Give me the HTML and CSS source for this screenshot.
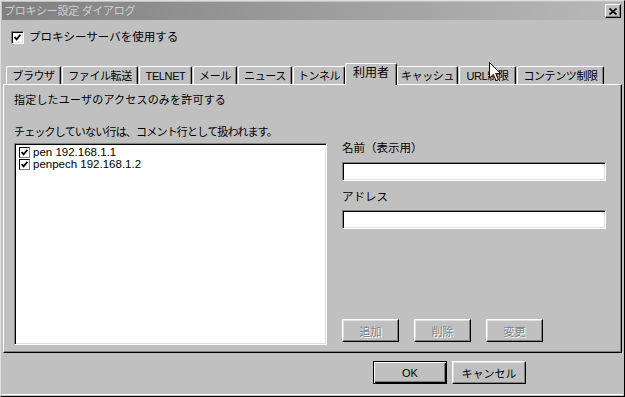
FILE: index.html
```html
<!DOCTYPE html>
<html>

<head>
  <meta charset="UTF-8">
  <title>プロキシー設定 ダイアログ</title>
  <link rel="stylesheet" href="styles.css">
</head>

<body>

  <div id="dialog">

    <div id="title-bar">
      <span id="title-text">プロキシー設定 ダイアログ</span>
      <button id="close-button">
        <svg width="8" height="7" viewBox="0 0 8 7"><path d="M0.5 0.5 L7.5 6.5 M7.5 0.5 L0.5 6.5" stroke="#000" stroke-width="1.6" fill="none"/></svg>
      </button>
    </div>

    <div id="use-proxy">
      <span class="check-box">
        <svg class="tick" width="7" height="7" viewBox="0 0 7 7"><path d="M0.6 3 L2.6 5.3 L6.4 0.8" stroke="#000" stroke-width="1.8" fill="none"/></svg>
      </span>
      <label>プロキシーサーバを使用する</label>
    </div>

    <div id="tab-row">
      <div class="tab">ブラウザ</div>
      <div class="tab">ファイル転送</div>
      <div class="tab">TELNET</div>
      <div class="tab">メール</div>
      <div class="tab">ニュース</div>
      <div class="tab">トンネル</div>
      <div class="tab active">利用者</div>
      <div class="tab">キャッシュ</div>
      <div class="tab">URL制限</div>
      <div class="tab">コンテンツ制限</div>
    </div>

    <div id="tab-panel">
      <div class="panel-line">指定したユーザのアクセスのみを許可する</div>

      <div class="panel-columns">
        <div class="user-column">
          <div class="field-label note">チェックしていない行は、コメント行として扱われます。</div>
          <div id="user-list">
            <div class="list-row">
              <span class="check-box small">
                <svg class="tick" width="7" height="7" viewBox="0 0 7 7"><path d="M0.6 3 L2.6 5.3 L6.4 0.8" stroke="#000" stroke-width="1.8" fill="none"/></svg>
              </span>
              <span>pen 192.168.1.1</span>
            </div>
            <div class="list-row">
              <span class="check-box small">
                <svg class="tick" width="7" height="7" viewBox="0 0 7 7"><path d="M0.6 3 L2.6 5.3 L6.4 0.8" stroke="#000" stroke-width="1.8" fill="none"/></svg>
              </span>
              <span>penpech 192.168.1.2</span>
            </div>
          </div>
        </div>

        <div class="edit-column">
          <div class="field-label">名前（表示用）</div>
          <div class="text-field"></div>
          <div class="field-label second">アドレス</div>
          <div class="text-field"></div>

          <div class="edit-buttons">
            <button class="win-button disabled">追加</button>
            <button class="win-button disabled">削除</button>
            <button class="win-button disabled">変更</button>
          </div>
        </div>
      </div>
    </div>

    <div id="dialog-footer">
      <button class="win-button default">OK</button>
      <button class="win-button">キャンセル</button>
    </div>

  </div>

  <!-- mouse pointer left over the tabs -->
  <svg id="mouse-pointer" width="13" height="20" viewBox="0 0 13 20">
    <path d="M0.5 0.5 L0.5 16 L4.3 12.4 L7 18.6 L9.3 17.6 L6.7 11.6 L11.6 11.6 Z" fill="#fff" stroke="#000" stroke-width="1"/>
  </svg>

</body>

</html>
```

FILE: styles.css
```css
body {
  margin: 0;
  padding: 0;
  background-color: #c0c0c0;
  font-family: "Liberation Sans", "Noto Sans CJK JP", sans-serif;
  font-size: 11px;
  color: #000;
}

button {
  font-family: inherit;
  font-size: 11px;
  padding: 0;
  margin: 0;
}

#dialog {
  width: 625px;
  height: 397px;
  box-sizing: border-box;
  display: flex;
  flex-direction: column;
  background-color: #c0c0c0;
  border-top: 1px solid #dfdfdf;
  border-left: 1px solid #dfdfdf;
  border-right: 1px solid #000;
  border-bottom: 1px solid #000;
  padding: 1px;
}

#title-bar {
  height: 18px;
  display: flex;
  align-items: center;
  justify-content: space-between;
  background: linear-gradient(to right, #808080, #b8b8b8);
  padding-left: 2px;
  padding-right: 2px;
  flex-shrink: 0;
}

#title-text {
  color: #cfcfcf;
  font-size: 11px;
  line-height: 13px;
  letter-spacing: -0.3px;
}

#close-button {
  width: 16px;
  height: 14px;
  display: flex;
  align-items: center;
  justify-content: center;
  background-color: #c0c0c0;
  border: 1px solid;
  border-color: #fff #000 #000 #fff;
  box-shadow: inset -1px -1px #808080;
}

#use-proxy {
  display: flex;
  align-items: center;
  margin-top: 11px;
  margin-left: 9px;
  height: 13px;
  flex-shrink: 0;
}

#use-proxy label {
  margin-left: 5px;
  font-size: 11.5px;
  line-height: 13px;
}

.check-box {
  width: 13px;
  height: 13px;
  box-sizing: border-box;
  display: inline-flex;
  align-items: center;
  justify-content: center;
  background-color: #fff;
  border: 1px solid;
  border-color: #808080 #fff #fff #808080;
  box-shadow: inset 1px 1px #000, inset -1px -1px #dfdfdf;
  flex-shrink: 0;
}

.check-box.small {
  width: 11px;
  height: 11px;
  border-color: #000 #808080 #808080 #000;
  box-shadow: none;
}

/* tabs */

#tab-row {
  display: flex;
  align-items: flex-end;
  height: 21px;
  margin-top: 19px;
  padding-left: 4px;
  flex-shrink: 0;
}

.tab {
  height: 18px;
  box-sizing: border-box;
  padding-top: 2px;
  line-height: 14px;
  font-size: 11px;
  letter-spacing: -0.4px;
  text-align: center;
  white-space: nowrap;
  border-top: 1px solid #fff;
  border-left: 1px solid #fff;
  border-right: 1px solid #000;
  box-shadow: inset -1px 0 #808080;
  border-radius: 2px 2px 0 0;
  margin-right: 1px;
}

.tab:nth-child(1) { width: 55px; }
.tab:nth-child(2) { width: 76px; }
.tab:nth-child(3) { width: 53px; }
.tab:nth-child(4) { width: 44px; }
.tab:nth-child(5) { width: 54px; }
.tab:nth-child(6) { width: 52px; margin-right: 0; }
.tab:nth-child(7) { width: 52px; margin-right: 0; }
.tab:nth-child(8) { width: 61px; }
.tab:nth-child(9) { width: 57px; }
.tab:nth-child(10) { width: 87px; }

.tab.active {
  height: 22px;
  margin-bottom: -1px;
  padding-top: 2px;
  font-size: 12px;
  letter-spacing: 0;
  background-color: #c0c0c0;
  position: relative;
  z-index: 1;
}

/* panel */

#tab-panel {
  height: 269px;
  box-sizing: border-box;
  display: flex;
  flex-direction: column;
  margin-left: 1px;
  margin-right: 1px;
  padding: 9px 13px 7px 10px;
  border-top: 1px solid #fff;
  border-left: 1px solid #fff;
  border-right: 1px solid #000;
  border-bottom: 1px solid #000;
  box-shadow: inset -1px -1px #808080;
  flex-shrink: 0;
}

.panel-line {
  line-height: 13px;
  font-size: 11px;
  letter-spacing: 0.2px;
}

.panel-columns {
  flex: 1;
  display: flex;
  gap: 15px;
  margin-top: 19px;
}

.user-column {
  width: 313px;
  display: flex;
  flex-direction: column;
}

.field-label {
  line-height: 13px;
  font-size: 11.5px;
  margin-bottom: 4px;
}

.field-label.note {
  font-size: 11px;
  letter-spacing: -0.8px;
}

#user-list {
  flex: 1;
  background-color: #fff;
  border: 1px solid;
  border-color: #808080 #fff #fff #808080;
  box-shadow: inset 1px 1px #000, inset -1px -1px #dfdfdf;
  padding: 3px 4px;
}

.list-row {
  display: flex;
  align-items: center;
  gap: 3px;
  height: 11px;
  line-height: 11px;
  font-size: 11.5px;
  margin-bottom: 1px;
}

.edit-column {
  width: 264px;
  display: flex;
  flex-direction: column;
  padding-top: 16px;
  padding-bottom: 3px;
}

.edit-column .field-label {
  margin-bottom: 7px;
}

.edit-column .field-label.second {
  margin-top: 10px;
  margin-bottom: 6px;
}

.text-field {
  height: 19px;
  box-sizing: border-box;
  background-color: #fff;
  border: 1px solid;
  border-color: #808080 #fff #fff #808080;
  box-shadow: inset 1px 1px #000, inset -1px -1px #dfdfdf;
}

.edit-buttons {
  display: flex;
  gap: 15px;
  margin-top: auto;
}

/* buttons */

.win-button {
  width: 57px;
  height: 23px;
  box-sizing: border-box;
  background-color: #c0c0c0;
  border: 1px solid;
  border-color: #fff #000 #000 #fff;
  box-shadow: inset -1px -1px #808080, inset 1px 1px #dfdfdf;
  color: #000;
}

.win-button.disabled {
  color: #808080;
  text-shadow: 1px 1px #fff;
}

#dialog-footer {
  flex: 1;
  display: flex;
  justify-content: flex-end;
  align-items: flex-start;
  gap: 5px;
  padding-top: 8px;
  padding-right: 97px;
  border-bottom: 1px solid #fff;
}

#dialog-footer .win-button {
  width: 74px;
}

.win-button.default {
  border: 1px solid #000;
  box-shadow: inset 1px 1px #fff, inset -1px -1px #000, inset -2px -2px #808080;
}

#mouse-pointer {
  position: absolute;
  left: 489px;
  top: 62px;
}
```
